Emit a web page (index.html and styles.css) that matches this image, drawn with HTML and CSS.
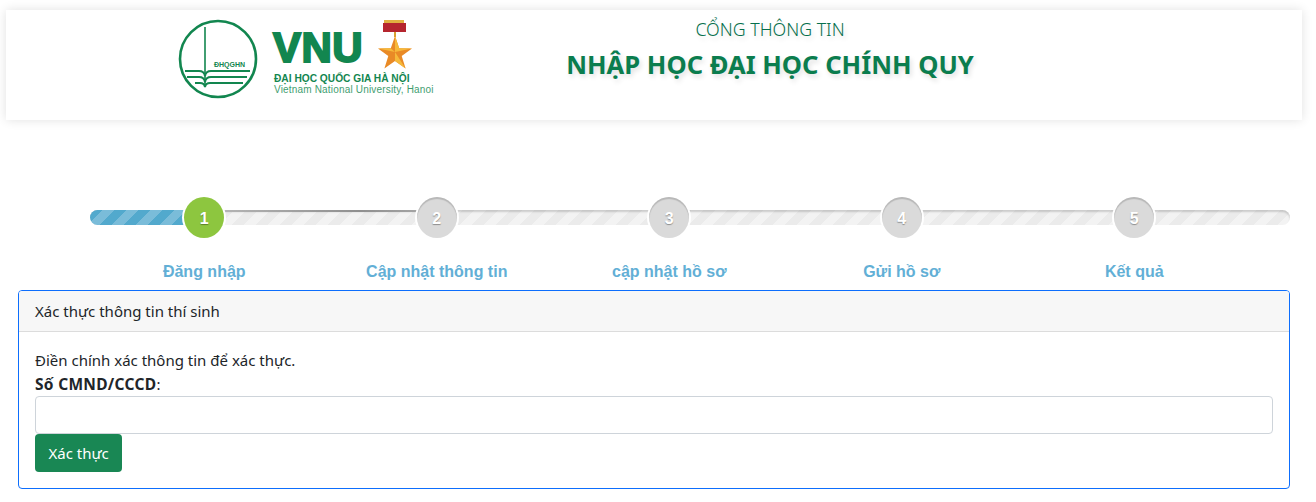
FILE: index.html
```html
<!DOCTYPE html>
<html lang="en">
<head>
  <meta charset="UTF-8">
  <meta name="viewport" content="width=device-width, initial-scale=1.0">
  <title>Nhập học đại học chính quy</title>
  <link rel="stylesheet" href="styles.css">
</head>
<body>
  <header class="site-header">
    <div class="logo">
      <svg class="emblem" width="80" height="80" viewBox="0 0 80 80">
        <circle cx="40" cy="40" r="38" fill="#fff" stroke="#12864f" stroke-width="2.6"/>
        <path d="M27 8V68" fill="none" stroke="#12864f" stroke-width="1.6"/>
        <path d="M7 52H21C24 52 26.500 54 27 57C27.500 54 30 52 33 52H72" fill="none" stroke="#12864f" stroke-width="2"/>
        <path d="M9 58H21C24 58 26.500 60 27 63C27.500 60 30 58 33 58H69" fill="none" stroke="#12864f" stroke-width="2"/>
        <path d="M17 64H22C24 64 26.500 65 27 68C27.500 65 30 64 32 64H65" fill="none" stroke="#12864f" stroke-width="2"/>
        <text x="36" y="48" class="emblem-text">ĐHQGHN</text>
      </svg>
      <div class="logo-text">
        <div class="logo-top">
          <span class="vnu">VNU</span>
          <svg class="medal" width="36" height="52" viewBox="0 0 36 52">
            <rect x="7" y="1" width="20" height="3" fill="#e0b040"/>
            <rect x="6" y="4" width="23" height="9" fill="#b5252e"/>
            <path d="M18 13V18" stroke="#d8a030" stroke-width="2"/>
            <path d="M18 17L22.2 29.2L35 29.4L24.7 37L28.6 49.4L18 42L7.400 49.4L11.300 37L1 29.400L13.800 29.200Z" fill="#e98a26"/>
            <path d="M18 17L22.200 29.200L35 29.400L18 33ZM18 33L28.600 49.400L18 42ZM18 33L1 29.400L13.800 29.200Z" fill="#f6b93a"/>
          </svg>
        </div>
        <div class="logo-vn">ĐẠI HỌC QUỐC GIA HÀ NỘI</div>
        <div class="logo-en">Vietnam National University, Hanoi</div>
      </div>
    </div>
    <div class="portal-title">
      <div class="portal-sub">CỔNG THÔNG TIN</div>
      <h1>NHẬP HỌC ĐẠI HỌC CHÍNH QUY</h1>
    </div>
  </header>

  <section class="stepper">
    <div class="track"><div class="track-fill"></div><div class="track-shade"></div></div>
    <div class="step active"><div class="step-num">1</div><div class="step-label">Đăng nhập</div></div>
    <div class="step"><div class="step-num">2</div><div class="step-label">Cập nhật thông tin</div></div>
    <div class="step"><div class="step-num">3</div><div class="step-label">cập nhật hồ sơ</div></div>
    <div class="step"><div class="step-num">4</div><div class="step-label">Gửi hồ sơ</div></div>
    <div class="step"><div class="step-num">5</div><div class="step-label">Kết quả</div></div>
  </section>

  <section class="card">
    <div class="card-header">Xác thực thông tin thí sinh</div>
    <div class="card-body">
      <div>Điền chính xác thông tin để xác thực.</div>
      <label for="cccd"><strong>Số CMND/CCCD</strong>:</label>
      <input type="text" id="cccd">
      <button type="button">Xác thực</button>
    </div>
  </section>
</body>
</html>
```

FILE: styles.css
```css
body {
  font-family: "Noto Sans", "Open Sans", sans-serif;
  font-size: 15px;
  line-height: 24px;
  color: #212529;
  background-color: #fff;
  margin: 0;
}

.site-header {
  display: flex;
  align-items: flex-start;
  margin: 10px 14px 0 6px;
  height: 110px;
  padding-left: 172px;
  background: #fff;
  box-shadow: 0 0 10px rgba(0, 0, 0, 0.12);
}

.logo {
  display: flex;
  width: 258px;
  margin-top: 9px;
  margin-right: 119px;
}

.emblem {
  flex: none;
  margin-right: 13px;
}

.emblem-text {
  font-family: "Liberation Sans", sans-serif;
  font-size: 7px;
  font-weight: bold;
  fill: #12864f;
}

.logo-text {
  font-family: "Liberation Sans", sans-serif;
  white-space: nowrap;
}

.logo-top {
  display: flex;
  height: 54px;
}

.vnu {
  font-size: 42px;
  line-height: 50px;
  font-weight: bold;
  color: #12864f;
  -webkit-text-stroke: 2px #12864f;
  width: 104px;
  margin-top: 4px;
  margin-left: 2px;
  letter-spacing: 0.500px;
}

.logo-vn {
  font-size: 10.200px;
  line-height: 11px;
  font-weight: bold;
  color: #12864f;
  margin-left: 3px;
}

.logo-en {
  font-size: 10px;
  line-height: 12px;
  color: #3f9e70;
  letter-spacing: 0.180px;
  margin-left: 3px;
}

.portal-title {
  width: 430px;
  text-align: center;
  color: #0b7d4e;
  text-shadow: 2px 3px 5px rgba(0, 0, 0, 0.12);
}

.portal-sub {
  font-size: 17.800px;
  font-weight: 300;
  line-height: 24px;
  margin-top: 7px;
  color: #056f4c;
}

.portal-title h1 {
  font-size: 25.600px;
  line-height: 34px;
  font-weight: bold;
  margin: 7px 0 0;
}

.stepper {
  position: relative;
  display: grid;
  grid-template-columns: repeat(5, 232.500px);
  margin: 77px 0 0 88px;
}

.track {
  position: absolute;
  left: 2px;
  top: 13px;
  width: 1200px;
  height: 15px;
  border-radius: 8px;
  overflow: hidden;
  background: repeating-linear-gradient(135deg, #f3f3f3 0 8.500px, #ebebeb 8.500px 17px);
  box-shadow: inset 0 2px 2px rgba(0, 0, 0, 0.16);
}

.track-fill {
  width: 100px;
  height: 100%;
  background: repeating-linear-gradient(135deg, #52a9cd 0 8.500px, #7abcd9 8.500px 17px);
}

.track-shade {
  position: absolute;
  left: 130px;
  top: 0;
  width: 200px;
  height: 2px;
  background: linear-gradient(90deg, #b5b5b5, #8f8f8f 70%, #a5a5a5);
}

.step {
  position: relative;
  text-align: center;
}

.step-num {
  width: 40px;
  height: 41px;
  margin: 0 auto;
  border-radius: 50%;
  background: #dadada;
  box-shadow: 0 0 0 2px #fff, inset 0 2px 1px rgba(0, 0, 0, 0.16);
  font-family: "Liberation Sans", sans-serif;
  font-size: 16px;
  font-weight: bold;
  line-height: 43px;
  color: #fff;
  text-shadow: 0 1px 1px rgba(0, 0, 0, 0.35);
}

.active .step-num {
  background: #8dc63f;
  box-shadow: 0 0 0 2px #fff;
}

.step-label {
  margin-top: 24px;
  font-family: "Liberation Sans", sans-serif;
  font-size: 16px;
  font-weight: bold;
  line-height: 20px;
  color: #62afd6;
}

.card {
  margin: 8px 26px 0 18px;
  border: 1px solid #0d6efd;
  border-radius: 4px;
}

.card-header {
  height: 41px;
  padding: 8px 16px;
  box-sizing: border-box;
  background: #f7f7f7;
  border-bottom: 1px solid #dcdcdc;
  border-radius: 3px 3px 0 0;
}

.card-body {
  padding: 16px;
}

label {
  display: block;
}

label strong {
  font-size: 15.500px;
  letter-spacing: 0.300px;
}

input {
  display: block;
  width: 100%;
  height: 38px;
  box-sizing: border-box;
  border: 1px solid #ced4da;
  border-radius: 4px;
}

button {
  display: block;
  height: 38px;
  padding: 0 13.500px;
  font-family: inherit;
  font-size: 15px;
  color: #fff;
  background-color: #198754;
  border: none;
  border-radius: 4px;
  cursor: pointer;
}
```
